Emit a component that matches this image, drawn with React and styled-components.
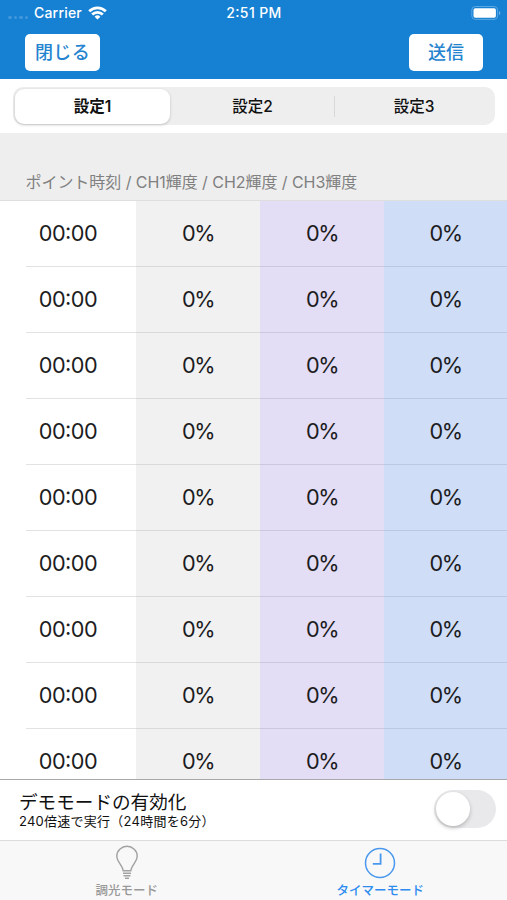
import React, {useState} from 'react'
import styled, {createGlobalStyle} from 'styled-components'

const GlobalStyle = createGlobalStyle`
    * {
        box-sizing: border-box;
    }
    body {
        margin: 0;
        background: #fff;
        font-family: Inter, "Noto Sans CJK JP", sans-serif;
        color: #1c1c1e;
    }
    button {
        font-family: inherit;
        border: 0;
        padding: 0;
        cursor: pointer;
    }
`

const presets = ['設定1', '設定2', '設定3']

const points = Array.from({length: 9}, () => ({time: '00:00', levels: [0, 0, 0]}))

const channelColors = ['#f1f1f1', '#e3ddf5', '#cfddf7']

function App() {

    const [preset, setPreset] = useState(0)
    const [demo, setDemo] = useState(false)

    return (
        <Screen>
            <GlobalStyle />
            <StatusBar>
                <Carrier>
                    <SignalDots><i /><i /><i /><i /></SignalDots>
                    <span>Carrier</span>
                    <WifiIcon />
                </Carrier>
                <Clock>2:51 PM</Clock>
                <BatteryIcon />
            </StatusBar>
            <NavBar>
                <NavButton $spacing="0.3px">閉じる</NavButton>
                <NavButton>送信</NavButton>
            </NavBar>
            <SegmentBar>
                <Segments>
                    {presets.map((name, index) => (
                        <Segment
                            key={name}
                            $active={index === preset}
                            $divided={index > 0 && index !== preset && index - 1 !== preset}
                            onClick={() => setPreset(index)}
                        >
                            {name}
                        </Segment>
                    ))}
                </Segments>
            </SegmentBar>
            <SectionHeader>ポイント時刻 / CH1輝度 / CH2輝度 / CH3輝度</SectionHeader>
            <Table>
                {points.map((point, index) => (
                    <Row key={index}>
                        <TimeCell>{point.time}</TimeCell>
                        {point.levels.map((level, channel) => (
                            <LevelCell key={channel} $color={channelColors[channel]}>{level}%</LevelCell>
                        ))}
                    </Row>
                ))}
            </Table>
            <DemoBar>
                <div>
                    <DemoTitle>デモモードの有効化</DemoTitle>
                    <DemoNote>240倍速で実行（24時間を6分）</DemoNote>
                </div>
                <Toggle $on={demo} onClick={() => setDemo(!demo)} aria-label="デモモードの有効化">
                    <Knob />
                </Toggle>
            </DemoBar>
            <TabBar>
                <Tab>
                    <BulbIcon />
                    <TabLabel>調光モード</TabLabel>
                </Tab>
                <Tab $active>
                    <ClockIcon />
                    <TabLabel $active>タイマーモード</TabLabel>
                </Tab>
            </TabBar>
        </Screen>
    )
}

function WifiIcon() {
    return (
        <svg width="19" height="14" viewBox="0 0 19 14" fill="none" stroke="#fff" strokeWidth="2.8">
            <path d="M1.2 5.2a11.8 11.8 0 0 1 16.6 0" />
            <path d="M4.2 8.5a7.5 7.5 0 0 1 10.6 0" />
            <path d="M9.5 13.6 6.6 10.7a4.1 4.1 0 0 1 5.8 0z" fill="#fff" stroke="none" />
        </svg>
    )
}

function BatteryIcon() {
    return (
        <svg width="30" height="14" viewBox="0 0 30 14">
            <rect x="0.8" y="0.5" width="25.8" height="12.9" rx="3.5" fill="none" stroke="#5ba7e2" />
            <rect x="2.5" y="2.3" width="22.4" height="9.4" rx="1.8" fill="#fff" />
            <path d="M28 5v4.2q1.3-.6 1.3-2.1T28 5z" fill="#6fb2e6" />
        </svg>
    )
}

function BulbIcon() {
    return (
        <svg width="24" height="36" viewBox="0 0 24 36" fill="none" stroke="#a2a2a2" strokeWidth="1.4">
            <path d="M8.2 25.8c-.2-5.2-6.4-8.8-6.4-14.8a10.2 9.7 0 0 1 20.4 0c0 6-6.2 9.6-6.4 14.8z" />
            <path d="M8 28.2h8M8.5 30.8h7M10 33.2h4" />
        </svg>
    )
}

function ClockIcon() {
    return (
        <svg width="32" height="32" viewBox="0 0 32 32" fill="none" stroke="#4a98ee" strokeWidth="1.5">
            <circle cx="16" cy="16" r="14.5" />
            <path d="M16.6 6.5v10.3H8.8" strokeWidth="1.8" />
        </svg>
    )
}

const Screen = styled.div`
    width: 507px;
    height: 900px;
    display: flex;
    flex-direction: column;
    overflow: hidden;
    background: #fff;
`

const StatusBar = styled.div`
    flex: none;
    height: 26px;
    padding: 0 6px 0 8px;
    display: grid;
    grid-template-columns: 1fr auto 1fr;
    align-items: center;
    background: #1681d3;
    color: #fff;
    font-size: 14px;
    font-weight: 500;
    line-height: 26px;

    > svg {
        justify-self: end;
    }
`

const Carrier = styled.div`
    display: flex;
    align-items: center;

    > span {
        margin: 0 6px;
        letter-spacing: 0.2px;
    }
`

const SignalDots = styled.div`
    display: flex;
    gap: 2px;
    padding-top: 8px;

    i {
        width: 3.5px;
        height: 3px;
        border-radius: 2px;
        background: #4297dc;
    }
`

const Clock = styled.div`
    padding-right: 1px;
    letter-spacing: 0.4px;
    font-feature-settings: "case";
`

const NavBar = styled.div`
    flex: none;
    height: 53px;
    padding: 8px 24px 0 25px;
    display: flex;
    justify-content: space-between;
    background: #1681d3;
`

const NavButton = styled.button`
    width: ${props => props.$spacing ? 75 : 74}px;
    height: 37px;
    border-radius: 5px;
    background: #fff;
    color: #2584cf;
    font-size: 18px;
    font-weight: 500;
    line-height: 37px;
    letter-spacing: ${props => props.$spacing || 0};
`

const SegmentBar = styled.div`
    flex: none;
    height: 54px;
    padding: 7.5px 12px 0 13px;
`

const Segments = styled.div`
    height: 38px;
    padding: 2px;
    display: grid;
    grid-template-columns: 155px 1fr 158px;
    column-gap: 2px;
    border-radius: 10px;
    background: #eee;
`

const Segment = styled.button`
    position: relative;
    padding-top: 1px;
    border-radius: 9px;
    background: ${props => props.$active ? '#fff' : 'transparent'};
    box-shadow: ${props => props.$active ? '0 1px 3px rgba(0, 0, 0, 0.2)' : 'none'};
    color: #111;
    font-size: 15.5px;
    font-weight: ${props => props.$active ? 600 : 500};
    line-height: 34px;

    &::before {
        content: "";
        display: ${props => props.$divided ? 'block' : 'none'};
        position: absolute;
        left: -1px;
        top: 7px;
        width: 1px;
        height: 21px;
        background: #d8d8da;
    }
`

const SectionHeader = styled.div`
    flex: none;
    height: 68px;
    padding: 37px 25px 0 25.5px;
    border-bottom: 1px solid #dedede;
    background: #eee;
    color: #808080;
    font-size: 16px;
    line-height: 24px;
    letter-spacing: -0.05px;
    white-space: nowrap;
`

const Table = styled.div`
    flex: none;
    height: 578px;
    overflow: hidden;
`

const Row = styled.div`
    height: 66px;
    display: grid;
    grid-template-columns: 136px 124px 124px 123px;
    font-size: 21.7px;
    font-feature-settings: "case";
    line-height: 65px;
    text-align: center;
    background: linear-gradient(#e2e2e2, #e2e2e2) 26px 65px / 110px 1px no-repeat;
`

const TimeCell = styled.div`
    height: 66px;
    letter-spacing: -0.5px;
`

const LevelCell = styled.div`
    height: 66px;
    background: ${props => props.$color};
    box-shadow: inset 0 -1px rgba(60, 60, 67, 0.13);
    letter-spacing: -1.5px;
`

const DemoBar = styled.div`
    flex: none;
    height: 61px;
    padding: 0 11px 0 19px;
    display: flex;
    justify-content: space-between;
    align-items: center;
    border-top: 1px solid #a8a8aa;
    color: #111;
`

const DemoTitle = styled.div`
    font-size: 18.6px;
    line-height: 22px;
`

const DemoNote = styled.div`
    font-size: 13px;
    line-height: 17px;
    letter-spacing: 0.25px;
`

const Toggle = styled.button`
    width: 62px;
    height: 38px;
    margin-bottom: 2px;
    padding: 2px;
    display: flex;
    justify-content: ${props => props.$on ? 'flex-end' : 'flex-start'};
    border-radius: 19px;
    background: ${props => props.$on ? '#34c759' : '#e9e9eb'};
`

const Knob = styled.span`
    width: 34px;
    height: 34px;
    border-radius: 50%;
    background: #fff;
    box-shadow: 0 2px 4px rgba(0, 0, 0, 0.22);
`

const TabBar = styled.div`
    flex: none;
    height: 60px;
    display: grid;
    grid-template-columns: 1fr 1fr;
    border-top: 1px solid #dcdcdc;
    background: #f8f8f8;
`

const Tab = styled.div`
    display: flex;
    flex-direction: column;
    align-items: center;
    padding-top: ${props => props.$active ? 6 : 4}px;
`

const TabLabel = styled.div`
    margin-top: ${props => props.$active ? 4 : 2}px;
    color: ${props => props.$active ? '#2e8cf0' : '#999'};
    font-size: 12.5px;
    font-weight: 500;
    line-height: 16px;
`

export default App
